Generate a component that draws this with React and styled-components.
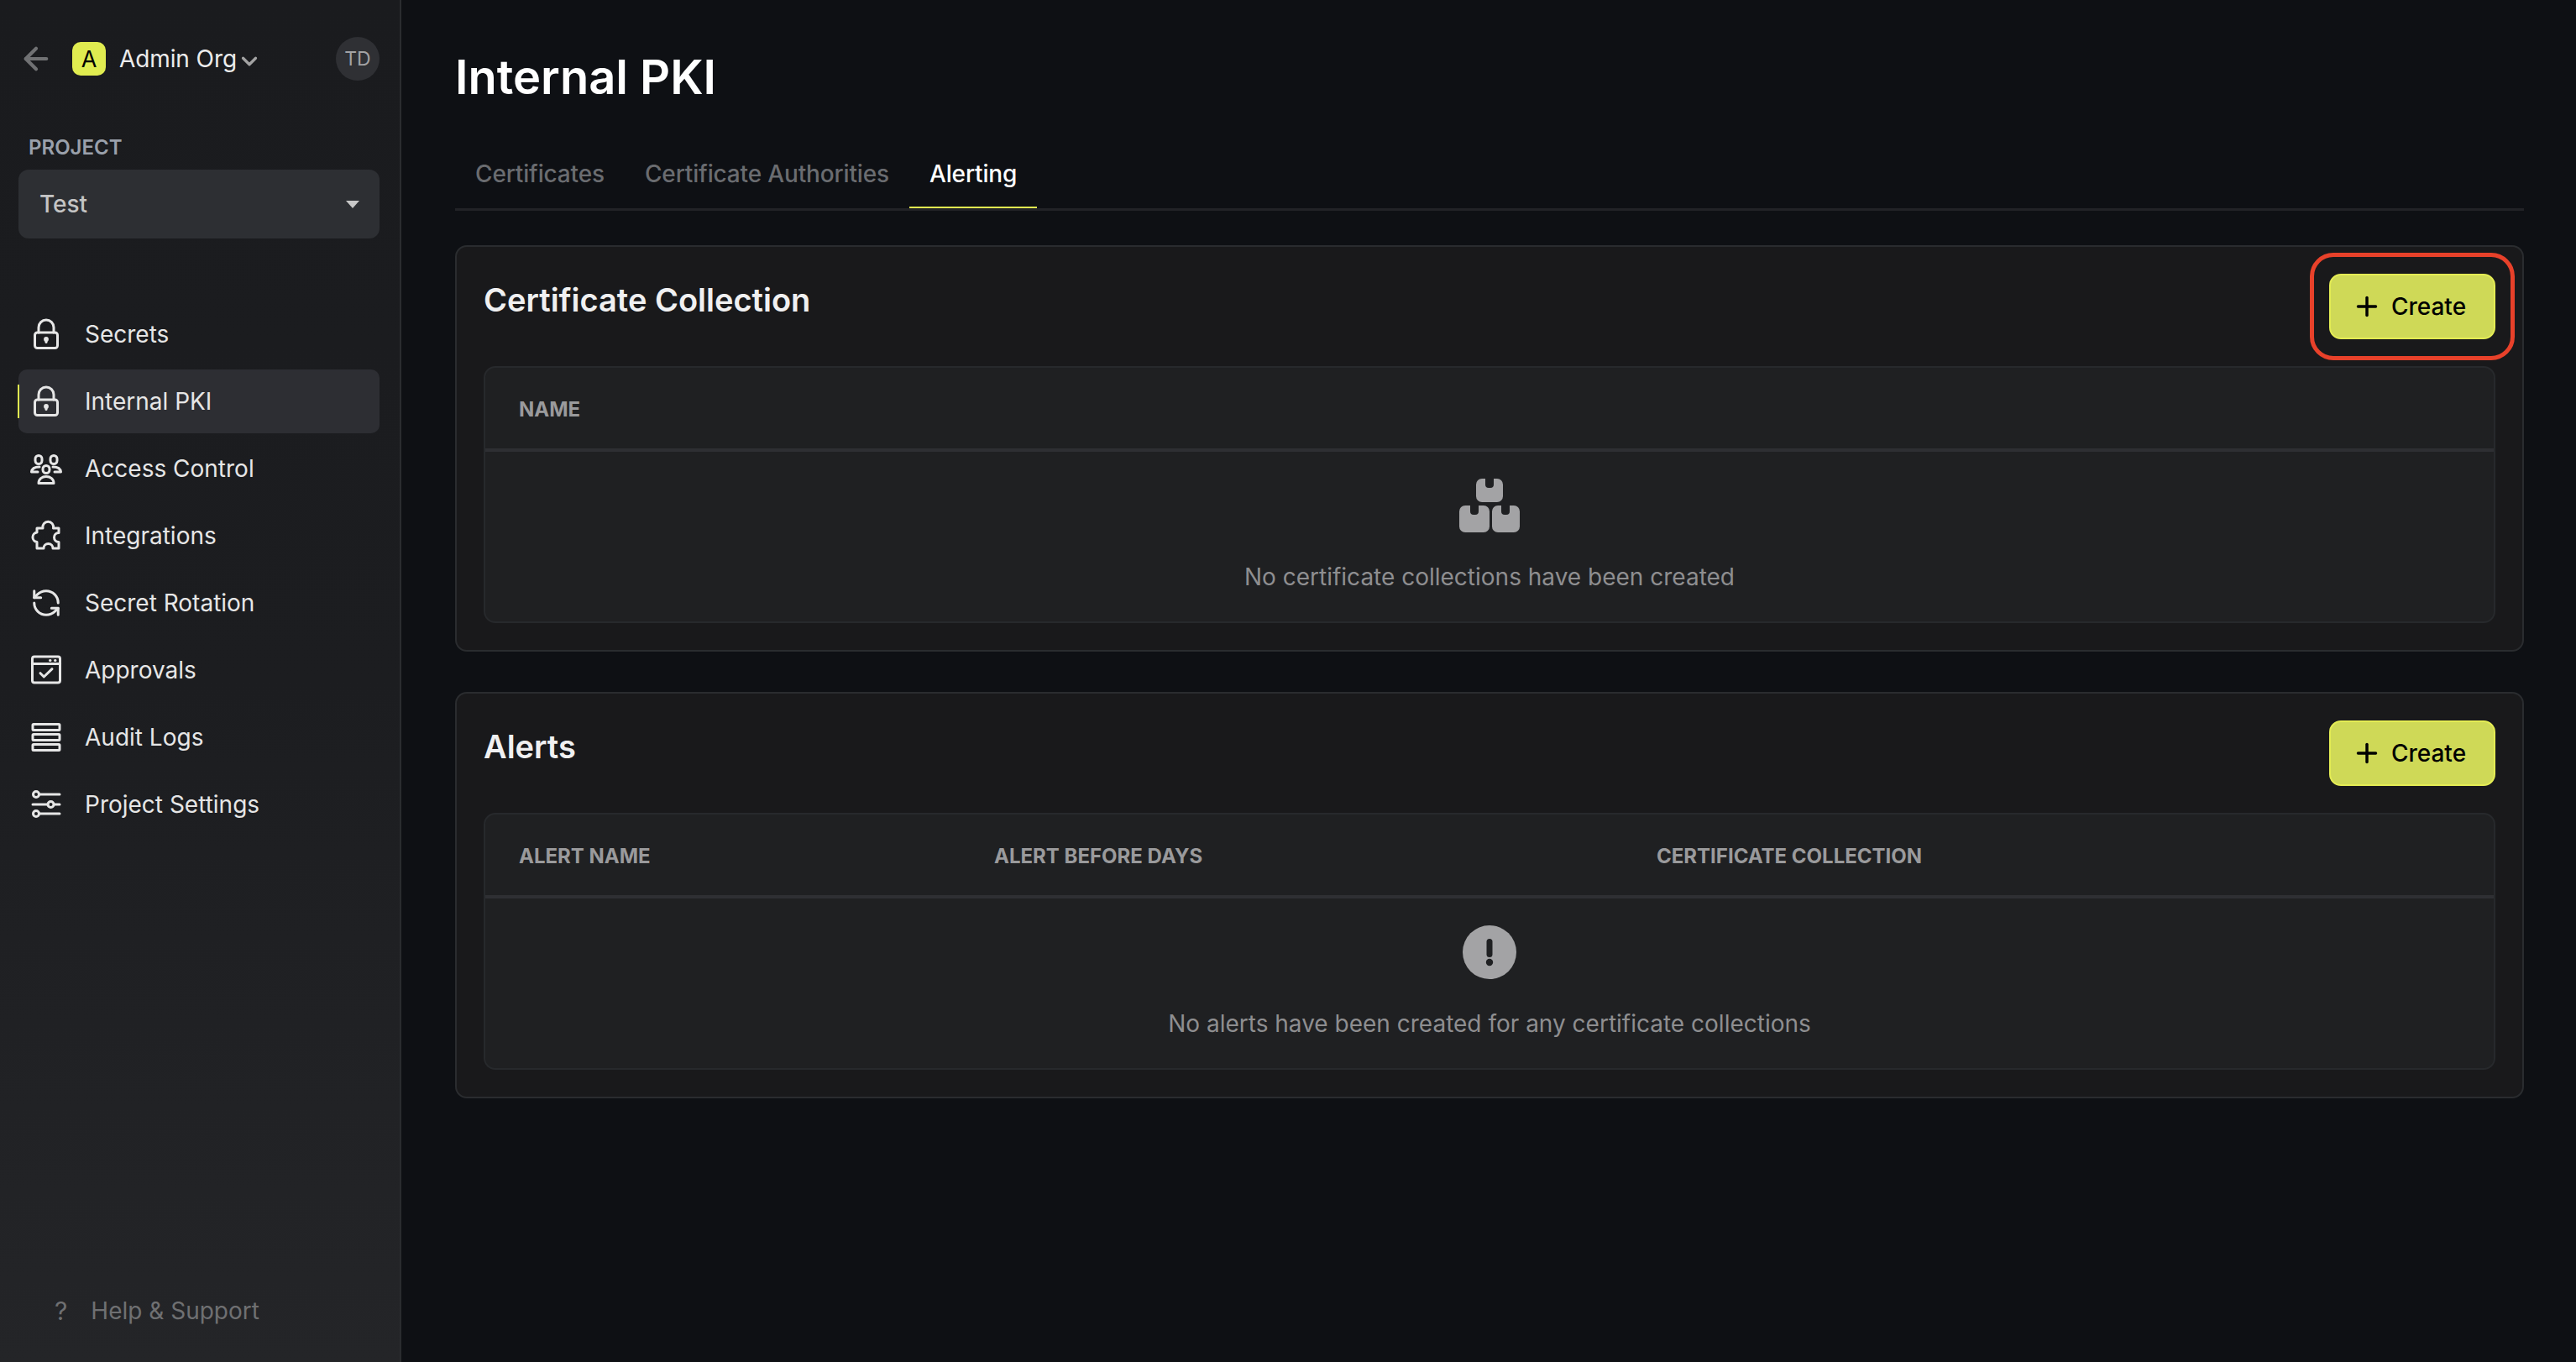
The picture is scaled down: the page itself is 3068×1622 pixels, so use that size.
import styled, { createGlobalStyle } from "styled-components";
import { ArrowLeft, ChevronDown, Plus, RefreshCcw } from "lucide-react";

const GlobalStyle = createGlobalStyle`
  html, body {
    margin: 0;
    padding: 0;
    background: #0e1014;
    font-family: Inter, "Noto Sans", sans-serif;
  }
  * {
    box-sizing: border-box;
  }
`;

const Glyph = ({ children }) => (
  <svg width="44" height="44" viewBox="0 0 44 44" fill="none" stroke="currentColor" strokeWidth="3" strokeLinecap="round" strokeLinejoin="round">
    {children}
  </svg>
);

const LockIcon = () => (
  <Glyph>
    <rect x="8.5" y="20" width="27" height="18.5" rx="3" />
    <path d="M13 20v-6a9 9 0 0 1 18 0v6" />
    <path d="M22 28v3.5" />
    <circle cx="22" cy="28" r="1.4" fill="currentColor" />
  </Glyph>
);

const UsersIcon = () => (
  <Glyph>
    <rect x="9" y="6.5" width="8" height="10" rx="4" />
    <rect x="27" y="6.5" width="8" height="10" rx="4" />
    <rect x="18" y="18.5" width="8" height="9" rx="4" />
    <path d="M14 20c-6 0-9 2-9.5 6H12" />
    <path d="M30 20c6 0 9 2 9.500 6H32" />
    <path d="M13 39.500c0-5 4-8 9-8s9 3 9 8z" />
  </Glyph>
);

const PuzzleIcon = () => (
  <Glyph>
    <path d="M18 13a6.400 6.400 0 1 1 12.500 0H37v5.500a5.500 5.500 0 0 0 0 11V37h-7a5.500 5.500 0 0 0-11 0h-8v-7.500a5.800 5.800 0 0 1 0-11.500V13z" />
  </Glyph>
);

const RotationIcon = () => <RefreshCcw size={38} strokeWidth={1.9} />;

const ApprovalsIcon = () => (
  <Glyph>
    <rect x="5.500" y="6" width="33" height="31" rx="2.500" />
    <path d="M5.500 14.500h33" />
    <path d="M26.500 10.500h.5M32.500 10.500h.5" />
    <path d="M15 25.700l4.300 4.300L29 20.700" />
  </Glyph>
);

const LogsIcon = () => (
  <Glyph>
    <rect x="6" y="6.500" width="32" height="7" rx="1" />
    <rect x="6" y="18.500" width="32" height="7" rx="1" />
    <rect x="6" y="30.500" width="32" height="7" rx="1" />
  </Glyph>
);

const SlidersIcon = () => (
  <Glyph>
    <circle cx="10" cy="10" r="3.500" />
    <path d="M14 10h24" />
    <circle cx="27.500" cy="22" r="3.500" />
    <path d="M6 22h18M31.500 22H38" />
    <circle cx="10" cy="33" r="3.500" />
    <path d="M14 33h24" />
  </Glyph>
);

const crateAt = (x, y, w, h, notch, r) => {
  const cx = x + notch;
  return `M${x + r} ${y}H${cx - 5}V${y + 7}a4 4 0 0 0 4 4h2a4 4 0 0 0 4-4V${y}H${x + w - r}a${r} ${r} 0 0 1 ${r} ${r}V${y + h - r}a${r} ${r} 0 0 1-${r} ${r}H${x + r}a${r} ${r} 0 0 1-${r}-${r}V${y + r}a${r} ${r} 0 0 1 ${r}-${r}z`;
};

const BoxesIcon = () => (
  <svg width="72" height="64" viewBox="0 0 72 64" fill="currentColor">
    <path d={crateAt(20, 0, 32, 28, 16, 7)} />
    <path d={crateAt(0, 32, 36, 32, 18, 7)} />
    <path d={crateAt(39, 32, 33, 32, 16, 7)} />
  </svg>
);

const AlertIcon = () => (
  <svg width="64" height="64" viewBox="0 0 64 64">
    <circle cx="32" cy="32" r="32" fill="currentColor" />
    <rect x="28.500" y="16" width="7" height="22" rx="3.500" fill="#1f2022" />
    <circle cx="32" cy="44" r="4.200" fill="#1f2022" />
  </svg>
);

const navItems = [
  { label: "Secrets", Icon: LockIcon },
  { label: "Internal PKI", Icon: LockIcon, active: true },
  { label: "Access Control", Icon: UsersIcon },
  { label: "Integrations", Icon: PuzzleIcon },
  { label: "Secret Rotation", Icon: RotationIcon },
  { label: "Approvals", Icon: ApprovalsIcon },
  { label: "Audit Logs", Icon: LogsIcon },
  { label: "Project Settings", Icon: SlidersIcon },
];

const App = () => {
  return (
    <Page>
      <GlobalStyle />
      <Sidebar>
        <OrgBar>
          <BackButton>
            <ArrowLeft size={42} strokeWidth={2.4} />
          </BackButton>
          <OrgBadge>A</OrgBadge>
          <OrgName>Admin Org</OrgName>
          <OrgChevron>
            <ChevronDown size={30} strokeWidth={2.6} />
          </OrgChevron>
          <Avatar>TD</Avatar>
        </OrgBar>
        <ProjectLabel>PROJECT</ProjectLabel>
        <ProjectSelect>
          Test
          <Caret />
        </ProjectSelect>
        <Nav>
          {navItems.map(({ label, Icon, active }) => (
            <NavItem key={label} $active={active}>
              <NavIcon>
                <Icon />
              </NavIcon>
              {label}
            </NavItem>
          ))}
        </Nav>
        <Help>
          <HelpMark>?</HelpMark>
          Help &amp; Support
        </Help>
      </Sidebar>
      <Main>
        <PageTitle>Internal PKI</PageTitle>
        <Tabs>
          <Tab>Certificates</Tab>
          <Tab>Certificate Authorities</Tab>
          <Tab $active>Alerting</Tab>
        </Tabs>
        <Cards>
          <Card>
            <CardHeader>
              <CardTitle>Certificate Collection</CardTitle>
              <CreateButton $highlighted>
                <Plus size={36} strokeWidth={2.3} />
                Create
              </CreateButton>
            </CardHeader>
            <TableFrame>
              <HeadRow>
                <HeadCell>Name</HeadCell>
              </HeadRow>
              <EmptyState>
                <BoxesIcon />
                <EmptyText>No certificate collections have been created</EmptyText>
              </EmptyState>
            </TableFrame>
          </Card>
          <Card>
            <CardHeader>
              <CardTitle>Alerts</CardTitle>
              <CreateButton>
                <Plus size={36} strokeWidth={2.3} />
                Create
              </CreateButton>
            </CardHeader>
            <TableFrame>
              <HeadRow>
                <HeadCell $width="566px">Alert Name</HeadCell>
                <HeadCell $width="789px">Alert Before Days</HeadCell>
                <HeadCell>Certificate Collection</HeadCell>
              </HeadRow>
              <EmptyState>
                <AlertIcon />
                <EmptyText>No alerts have been created for any certificate collections</EmptyText>
              </EmptyState>
            </TableFrame>
          </Card>
        </Cards>
      </Main>
    </Page>
  );
};

const Page = styled.div`
  display: flex;
  width: 3068px;
  height: 1622px;
  overflow: hidden;
  background: #0e1014;
`;

const Sidebar = styled.aside`
  display: flex;
  flex-direction: column;
  flex: 0 0 478px;
  padding: 44px 24px 41px 22px;
  border-right: 2px solid #2a2c2f;
  background: linear-gradient(180deg, #1a1b1e 0%, #1c1d20 50%, #242528 100%);
`;

const OrgBar = styled.div`
  display: flex;
  align-items: center;
  height: 52px;
`;

const BackButton = styled.span`
  display: flex;
  flex: 0 0 64px;
  color: #707173;

  svg {
    flex-shrink: 0;
  }
`;

const OrgBadge = styled.span`
  display: flex;
  align-items: center;
  justify-content: center;
  width: 40px;
  height: 40px;
  border-radius: 10px;
  background: #e0ec50;
  color: #000;
  font-size: 27px;
`;

const OrgName = styled.span`
  margin-left: 16px;
  color: #ececec;
  font-size: 28px;
  letter-spacing: -0.1px;
`;

const OrgChevron = styled.span`
  display: flex;
  margin-top: 6px;
  color: #a3a3a3;
`;

const Avatar = styled.span`
  display: flex;
  align-items: center;
  justify-content: center;
  width: 52px;
  height: 52px;
  margin-left: auto;
  border-radius: 50%;
  background: #2f3034;
  color: #a2a2a4;
  font-size: 23px;
`;

const ProjectLabel = styled.div`
  margin: 65px 0 0 12px;
  color: #9aa0ab;
  font-size: 24px;
  font-weight: 600;
  line-height: 30px;
`;

const ProjectSelect = styled.div`
  display: flex;
  align-items: center;
  justify-content: space-between;
  height: 82px;
  margin-top: 11px;
  padding: 0 24px 0 25px;
  border-radius: 12px;
  background: #2d2f33;
  color: #c4c4c4;
  font-size: 28px;
  font-weight: 500;
`;

const Caret = styled.span`
  width: 0;
  height: 0;
  border-left: 8px solid transparent;
  border-right: 8px solid transparent;
  border-top: 9px solid #c8c8c8;
`;

const Nav = styled.nav`
  display: flex;
  flex-direction: column;
  gap: 4px;
  margin-top: 76px;
`;

const NavItem = styled.a`
  position: relative;
  display: flex;
  align-items: center;
  gap: 24px;
  height: 76px;
  padding-left: 11px;
  border-radius: 10px;
  background: ${({ $active }) => ($active ? "#2d2e33" : "transparent")};
  color: #e6e6e6;
  font-size: 28px;

  ${({ $active }) =>
    $active &&
    `
    &::before {
      content: "";
      position: absolute;
      left: -1px;
      top: 18px;
      width: 2px;
      height: 40px;
      background: #e0ec50;
    }
  `}
`;

const NavIcon = styled.span`
  display: flex;
  align-items: center;
  justify-content: center;
  flex: 0 0 44px;
  height: 44px;
`;

const Help = styled.div`
  display: flex;
  align-items: center;
  gap: 28px;
  margin-top: auto;
  padding-left: 43px;
  color: #6f7072;
  font-size: 28px;
  line-height: 40px;
`;

const HelpMark = styled.span`
  font-size: 30px;
`;

const Main = styled.main`
  flex: 1;
  min-width: 0;
  padding: 56px 62px 0 64px;
`;

const PageTitle = styled.h1`
  margin: 0;
  color: #fff;
  font-size: 56px;
  font-weight: 600;
  line-height: 72px;
`;

const Tabs = styled.div`
  display: flex;
  margin-top: 38px;
  border-bottom: 3px solid #222327;
`;

const Tab = styled.div`
  display: flex;
  align-items: center;
  height: 82px;
  padding: 2px 24px 0;
  border-bottom: 2px solid ${({ $active }) => ($active ? "#e0ec50" : "transparent")};
  color: ${({ $active }) => ($active ? "#fff" : "#6a6c70")};
  font-size: 28px;
  font-weight: 500;
  letter-spacing: -0.15px;
`;

const Cards = styled.div`
  display: flex;
  flex-direction: column;
  gap: 48px;
  margin-top: 41px;
`;

const Card = styled.section`
  padding: 32px;
  border: 2px solid #2a2c2f;
  border-radius: 14px;
  background: #19191b;
`;

const CardHeader = styled.div`
  display: flex;
  align-items: flex-start;
  justify-content: space-between;
  margin-bottom: 32px;
`;

const CardTitle = styled.h2`
  margin: 0;
  color: #f0f0f1;
  font-size: 38px;
  font-weight: 600;
  line-height: 62px;
`;

const CreateButton = styled.button`
  position: relative;
  display: flex;
  align-items: center;
  justify-content: center;
  gap: 11px;
  width: 198px;
  height: 78px;
  padding: 0 8px 0 0;
  border: 2px solid #e4ec54;
  border-radius: 14px;
  background: #cfd957;
  color: #000;
  font-family: inherit;
  font-size: 28px;
  font-weight: 500;

  ${({ $highlighted }) =>
    $highlighted &&
    `
    &::after {
      content: "";
      position: absolute;
      inset: -27px -25px;
      border: 5px solid #e8412a;
      border-radius: 28px;
    }
  `}
`;

const TableFrame = styled.div`
  border: 2px solid #27292c;
  border-radius: 14px;
  background: #1f2022;
`;

const HeadRow = styled.div`
  display: flex;
  align-items: center;
  height: 100px;
  padding: 2px 0 0 40px;
  border-bottom: 4px solid #2e2f33;
`;

const HeadCell = styled.div`
  flex: 0 0 ${({ $width }) => $width || "auto"};
  color: #9a9a9c;
  font-size: 24px;
  font-weight: 700;
  text-transform: uppercase;
`;

const EmptyState = styled.div`
  display: flex;
  flex-direction: column;
  align-items: center;
  gap: 33px;
  padding: 32px 0 33px;
  color: #a3a3a5;
`;

const EmptyText = styled.div`
  color: #8e8e90;
  font-size: 28px;
  line-height: 40px;
`;

export default App;
